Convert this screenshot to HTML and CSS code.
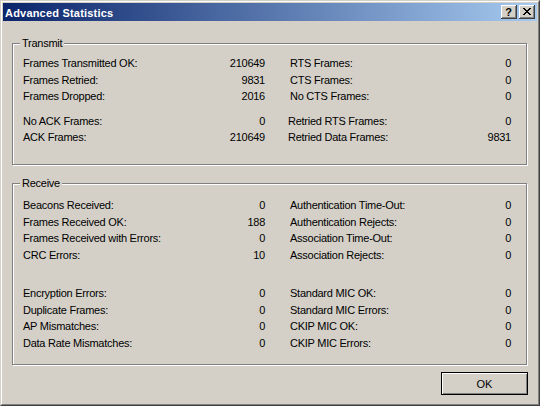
FILE: index.html
```html
<!DOCTYPE html>
<html>
<head>
<meta charset="utf-8">
<link rel="stylesheet" href="styles.css">
</head>
<body>
<div class="window">
  <div class="frame">
    <div class="titlebar">
      <span class="title">Advanced Statistics</span>
      <div class="caption-buttons">
        <div class="cap-btn help">?</div>
        <div class="cap-btn close">
          <svg width="8" height="7" viewBox="0 0 8 7" shape-rendering="crispEdges">
            <path fill="#000" d="M0 0h2v1H0zM6 0h2v1H6zM1 1h2v1H1zM5 1h2v1H5zM2 2h4v1H2zM3 3h2v1H3zM2 4h4v1H2zM1 5h2v1H1zM5 5h2v1H5zM0 6h2v1H0zM6 6h2v1H6z"/>
          </svg>
        </div>
      </div>
    </div>
    <div class="content">
      <div class="group transmit">
        <span class="group-label">Transmit</span>
        <div class="grid">
          <div class="cell"><span>Frames Transmitted OK:</span><span>210649</span></div>
          <div class="cell"><span>RTS Frames:</span><span>0</span></div>
          <div class="cell"><span>Frames Retried:</span><span>9831</span></div>
          <div class="cell"><span>CTS Frames:</span><span>0</span></div>
          <div class="cell"><span>Frames Dropped:</span><span>2016</span></div>
          <div class="cell"><span>No CTS Frames:</span><span>0</span></div>
          <div class="cell sep"><span>No ACK Frames:</span><span>0</span></div>
          <div class="cell sep shift"><span>Retried RTS Frames:</span><span>0</span></div>
          <div class="cell"><span>ACK Frames:</span><span>210649</span></div>
          <div class="cell shift"><span>Retried Data Frames:</span><span>9831</span></div>
        </div>
      </div>
      <div class="group receive">
        <span class="group-label">Receive</span>
        <div class="grid">
          <div class="cell"><span>Beacons Received:</span><span>0</span></div>
          <div class="cell"><span>Authentication Time-Out:</span><span>0</span></div>
          <div class="cell"><span>Frames Received OK:</span><span>188</span></div>
          <div class="cell"><span>Authentication Rejects:</span><span>0</span></div>
          <div class="cell"><span>Frames Received with Errors:</span><span>0</span></div>
          <div class="cell"><span>Association Time-Out:</span><span>0</span></div>
          <div class="cell"><span>CRC Errors:</span><span>10</span></div>
          <div class="cell"><span>Association Rejects:</span><span>0</span></div>
          <div class="cell sep-lg"><span>Encryption Errors:</span><span>0</span></div>
          <div class="cell sep-lg"><span>Standard MIC OK:</span><span>0</span></div>
          <div class="cell"><span>Duplicate Frames:</span><span>0</span></div>
          <div class="cell"><span>Standard MIC Errors:</span><span>0</span></div>
          <div class="cell"><span>AP Mismatches:</span><span>0</span></div>
          <div class="cell"><span>CKIP MIC OK:</span><span>0</span></div>
          <div class="cell"><span>Data Rate Mismatches:</span><span>0</span></div>
          <div class="cell"><span>CKIP MIC Errors:</span><span>0</span></div>
        </div>
      </div>
      <div class="buttons">
        <div class="btn default">OK</div>
      </div>
    </div>
  </div>
</div>
</body>
</html>
```
FILE: styles.css
```css
* { box-sizing: border-box; }
html, body { margin: 0; padding: 0; background: #d4d0c8; }
body {
  font-family: "Liberation Sans", Arial, sans-serif;
  font-size: 11px;
  color: #000;
}
.window {
  width: 540px;
  height: 406px;
  border: 1px solid;
  border-color: #d4d0c8 #404040 #404040 #d4d0c8;
  background: #d4d0c8;
}
.frame {
  height: 100%;
  border: 1px solid;
  border-color: #fff #808080 #808080 #fff;
  padding: 1px;
  display: flex;
  flex-direction: column;
}
.titlebar {
  height: 18px;
  flex: none;
  background: linear-gradient(to right, #0a246a, #a6caf0);
  display: flex;
  align-items: center;
  justify-content: space-between;
  padding: 0 2px 0 2px;
}
.title {
  color: #fff;
  font-weight: bold;
  font-size: 11px;
  letter-spacing: 0.2px;
  line-height: 18px;
  padding-top: 1px;
}
.caption-buttons {
  display: flex;
  gap: 2px;
  align-items: center;
}
.cap-btn {
  width: 16px;
  height: 14px;
  background: #d4d0c8;
  box-shadow: inset -1px -1px #404040, inset 1px 1px #fff, inset -2px -2px #808080;
  display: flex;
  align-items: center;
  justify-content: center;
}
.cap-btn.help {
  font-weight: bold;
  font-size: 11px;
  line-height: 14px;
  padding-right: 1px;
}
.cap-btn.close svg { display: block; margin-top: -1px; margin-right: 1px; }
.content {
  flex: 1;
  padding: 22px 10px 0 9px;
  display: flex;
  flex-direction: column;
}
.group {
  position: relative;
  border: 1px solid #808080;
  box-shadow: inset 1px 1px 0 #fff, 1px 1px 0 #fff;
  width: 515px;
}
.transmit { height: 122px; padding: 11px 0 0 10px; }
.receive { height: 182px; margin-top: 18px; padding: 13px 0 0 10px; }
.group-label {
  position: absolute;
  top: -7px;
  left: 7px;
  padding: 0 2px;
  line-height: 13px;
  letter-spacing: -0.25px;
  background: #d4d0c8;
}
.grid {
  display: grid;
  grid-template-columns: 242px 221px;
  column-gap: 25px;
}
.cell {
  display: flex;
  justify-content: space-between;
  line-height: 16.5px;
  letter-spacing: -0.25px;
  white-space: nowrap;
}
.cell.sep { margin-top: 8px; }
.cell.sep-lg { margin-top: 22px; }
.cell.shift { margin-left: -2px; }
.buttons {
  display: flex;
  justify-content: flex-end;
  margin-top: 7px;
}
.btn {
  width: 87px;
  height: 23px;
  display: flex;
  align-items: center;
  justify-content: center;
  background: #d4d0c8;
}
.btn.default {
  border: 1px solid #000;
  box-shadow: inset 1px 1px #fff, inset -1px -1px #808080;
  margin-right: -1px;
}
```
